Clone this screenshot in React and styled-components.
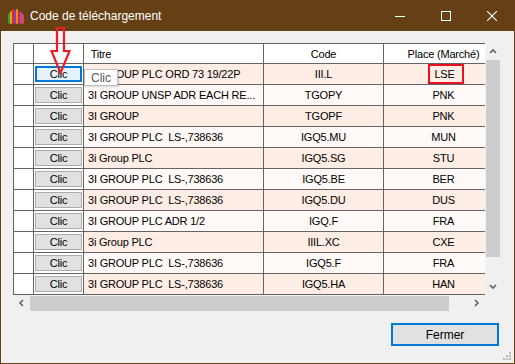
import styled, { createGlobalStyle } from "styled-components";

const GlobalStyle = createGlobalStyle`
  html, body {
    margin: 0;
    padding: 0;
    background: #f0f0f0;
  }
  * {
    box-sizing: border-box;
  }
`;

const rows = [
  { titre: "3I GROUP PLC ORD 73 19/22P", code: "III.L", place: "LSE" },
  { titre: "3I GROUP UNSP ADR EACH RE...", code: "TGOPY", place: "PNK" },
  { titre: "3I GROUP", code: "TGOPF", place: "PNK" },
  { titre: "3I GROUP PLC  LS-,738636", code: "IGQ5.MU", place: "MUN" },
  { titre: "3i Group PLC", code: "IGQ5.SG", place: "STU" },
  { titre: "3I GROUP PLC  LS-,738636", code: "IGQ5.BE", place: "BER" },
  { titre: "3I GROUP PLC  LS-,738636", code: "IGQ5.DU", place: "DUS" },
  { titre: "3I GROUP PLC ADR 1/2", code: "IGQ.F", place: "FRA" },
  { titre: "3i Group PLC", code: "IIIL.XC", place: "CXE" },
  { titre: "3I GROUP PLC  LS-,738636", code: "IGQ5.F", place: "FRA" },
  { titre: "3I GROUP PLC  LS-,738636", code: "IGQ5.HA", place: "HAN" },
];

const logoBars = [
  { c: "#2e9e3a", h: 11 },
  { c: "#e2a21b", h: 13 },
  { c: "#d62d2d", h: 15 },
  { c: "#8a3fb0", h: 14 },
  { c: "#f08a1c", h: 15 },
  { c: "#c9302c", h: 13 },
  { c: "#b04fc0", h: 12 },
  { c: "#e04848", h: 10 },
];

const Window = styled.div`
  position: relative;
  width: 515px;
  height: 364px;
  display: flex;
  flex-direction: column;
  border: 1px solid #654014;
  border-top: none;
  background: #f0f0f0;
  font-family: "Liberation Sans", Arial, sans-serif;
  overflow: hidden;
`;

const TitleBar = styled.div`
  height: 31px;
  flex: none;
  display: flex;
  align-items: center;
  background: #654014;
  margin: 0 -1px;
  padding-left: 8px;
  color: #fff;
  font-size: 12px;
`;

const AppIcon = styled.svg`
  width: 17px;
  height: 16px;
  margin-right: 5px;
  flex: none;
`;

const TitleText = styled.span`
  flex: 1;
`;

const Controls = styled.div`
  display: flex;
  height: 100%;
`;

const ControlBtn = styled.div`
  width: 46px;
  height: 100%;
  display: flex;
  align-items: center;
  justify-content: center;
`;

const Body = styled.div`
  flex: 1;
  display: flex;
  flex-direction: column;
  padding: 12px 0 0 12px;
`;

const GridBox = styled.div`
  width: 488px;
  display: grid;
  grid-template-columns: 472px 16px;
  grid-template-rows: 252px 16px;
`;

const Viewport = styled.div`
  border-left: 1px solid #646464;
  border-top: 1px solid #646464;
  overflow: hidden;
  font-size: 11px;
  letter-spacing: -0.2px;
  color: #000;
`;

const Row = styled.div`
  display: grid;
  grid-template-columns: 20px 50px 180px 120px 120px;
  width: 490px;
  height: ${(p) => (p.$header ? 20 : 21)}px;
`;

const Cell = styled.div`
  border-right: 1px solid #646464;
  border-bottom: 1px solid #646464;
  background: ${(p) => p.$bg};
  display: flex;
  align-items: center;
  justify-content: ${(p) => (p.$left ? "flex-start" : "center")};
  padding: ${(p) => (p.$left ? "0 0 0 4px" : "0")};
  white-space: pre;
  overflow: hidden;
`;

const BtnCell = styled.div`
  border-right: 1px solid #646464;
  border-bottom: 1px solid #646464;
  background: #fff;
  padding: 2px 1px 2px 1px;
`;

const ClicBtn = styled.div`
  width: 100%;
  height: 100%;
  display: flex;
  align-items: center;
  justify-content: center;
  background: ${(p) => (p.$focus ? "#e5f1fb" : "#e1e1e1")};
  border: ${(p) => (p.$focus ? "2px solid #0078d7" : "1px solid #adadad")};
  font-size: 11px;
`;

const Marked = styled.span`
  display: inline-block;
  height: 20px;
  line-height: 16px;
  margin-left: 5px;
  padding: 0 7px 0 4px;
  border: 2px solid #e8111f;
`;

const VScroll = styled.div`
  display: flex;
  flex-direction: column;
  align-items: center;
  background: #f0f0f0;
`;

const HScroll = styled.div`
  display: flex;
  align-items: center;
  background: #f0f0f0;
`;

const Arrow = styled.div`
  flex: none;
  width: ${(p) => (p.$h ? 17 : 16)}px;
  height: ${(p) => (p.$h ? 16 : 17)}px;
  display: flex;
  align-items: center;
  justify-content: center;
`;

const VThumb = styled.div`
  width: 14px;
  height: 197px;
  background: #cdcdcd;
`;

const HThumb = styled.div`
  width: 419px;
  height: 15px;
  background: #cdcdcd;
`;

const Spacer = styled.div`
  flex: 1;
`;

const Footer = styled.div`
  display: flex;
  justify-content: flex-end;
  padding: 12px 15px 0 0;
`;

const CloseButton = styled.div`
  width: 108px;
  height: 23px;
  display: flex;
  align-items: center;
  justify-content: center;
  background: #e1e1e1;
  border: 2px solid #0078d7;
  font-size: 12px;
  color: #000;
`;

const Tooltip = styled.div`
  position: absolute;
  left: 83px;
  top: 69px;
  width: 34px;
  height: 17px;
  display: flex;
  align-items: center;
  justify-content: center;
  background: #fff;
  border: 1px solid #bfbfbf;
  box-shadow: 1px 1px 2px rgba(0, 0, 0, 0.15);
  color: #575757;
  font-size: 12px;
`;

const RedArrow = styled.svg`
  position: absolute;
  left: 49px;
  top: 27px;
  width: 21px;
  height: 48px;
`;

const Grip = styled.svg`
  position: absolute;
  right: 2px;
  bottom: 2px;
  width: 10px;
  height: 10px;
`;

const Chevron = ({ dir }) => {
  const pts = {
    up: "1,5 4,2 7,5",
    down: "1,2 4,5 7,2",
    left: "5,1 2,4 5,7",
    right: "2,1 5,4 2,7",
  }[dir];
  return (
    <svg width="8" height="8" viewBox="0 0 8 8">
      <polyline points={pts} fill="none" stroke="#606060" strokeWidth="1.6" />
    </svg>
  );
};

export default function App() {
  return (
    <>
      <GlobalStyle />
      <Window>
        <TitleBar>
          <AppIcon viewBox="0 0 17 16">
            {logoBars.map((b, i) => (
              <rect key={i} x={i * 2} y={16 - b.h} width="2" height={b.h} rx="1" fill={b.c} />
            ))}
          </AppIcon>
          <TitleText>Code de téléchargement</TitleText>
          <Controls>
            <ControlBtn>
              <svg width="10" height="10" viewBox="0 0 10 10">
                <line x1="0" y1="5.5" x2="10" y2="5.5" stroke="#fff" strokeWidth="1" />
              </svg>
            </ControlBtn>
            <ControlBtn>
              <svg width="10" height="10" viewBox="0 0 10 10">
                <rect x="0.5" y="0.5" width="9" height="9" fill="none" stroke="#fff" strokeWidth="1" />
              </svg>
            </ControlBtn>
            <ControlBtn>
              <svg width="10" height="10" viewBox="0 0 10 10">
                <path d="M0 0 L10 10 M10 0 L0 10" stroke="#fff" strokeWidth="1.1" />
              </svg>
            </ControlBtn>
          </Controls>
        </TitleBar>

        <Body>
          <GridBox>
            <Viewport>
              <Row $header>
                <Cell $bg="#fff" />
                <Cell $bg="#fff" />
                <Cell $bg="#fff" $left>
                  {" Titre"}
                </Cell>
                <Cell $bg="#fff">Code</Cell>
                <Cell $bg="#fff">Place (Marché)</Cell>
              </Row>
              {rows.map((r, i) => {
                const bg = i % 2 === 0 ? "#fdede4" : "#fffaf8";
                return (
                  <Row key={i}>
                    <Cell $bg="#fff" />
                    <BtnCell>
                      <ClicBtn $focus={i === 0}>Clic</ClicBtn>
                    </BtnCell>
                    <Cell $bg={bg} $left>
                      {r.titre}
                    </Cell>
                    <Cell $bg={bg}>{r.code}</Cell>
                    <Cell $bg={bg}>{i === 0 ? <Marked>{r.place}</Marked> : r.place}</Cell>
                  </Row>
                );
              })}
            </Viewport>
            <VScroll>
              <Arrow>
                <Chevron dir="up" />
              </Arrow>
              <VThumb />
              <Spacer />
              <Arrow>
                <Chevron dir="down" />
              </Arrow>
            </VScroll>
            <HScroll>
              <Arrow $h>
                <Chevron dir="left" />
              </Arrow>
              <HThumb />
              <Spacer />
              <Arrow $h>
                <Chevron dir="right" />
              </Arrow>
            </HScroll>
            <div />
          </GridBox>

          <Footer>
            <CloseButton>Fermer</CloseButton>
          </Footer>
        </Body>

        <Tooltip>Clic</Tooltip>
        <RedArrow viewBox="0 0 21 48">
          <path
            d="M7 1 H14 V24 H19.5 L10.5 46 L1.5 24 H7 Z"
            fill="none"
            stroke="#ed1c24"
            strokeWidth="2.2"
            strokeLinejoin="miter"
          />
        </RedArrow>
        <Grip viewBox="0 0 10 10">
          {[
            [8, 2],
            [5, 5],
            [8, 5],
            [2, 8],
            [5, 8],
            [8, 8],
          ].map(([x, y], i) => (
            <rect key={i} x={x - 1} y={y - 1} width="2" height="2" fill="#b8b8b8" />
          ))}
        </Grip>
      </Window>
    </>
  );
}
